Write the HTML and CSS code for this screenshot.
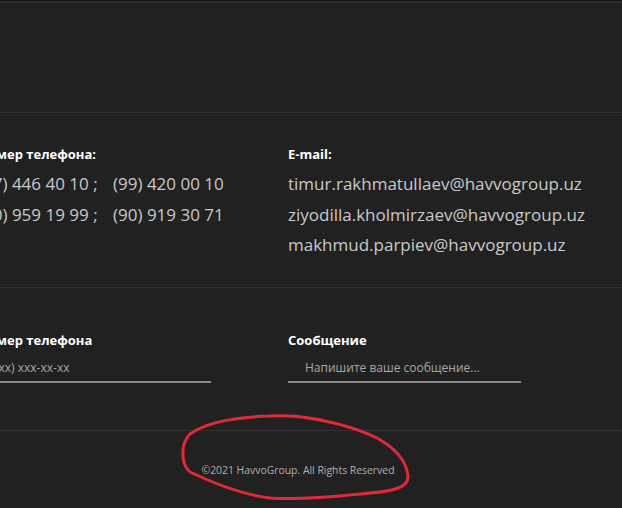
FILE: index.html
```html
<!DOCTYPE html>
<html lang="ru">
<head>
<meta charset="utf-8">
<title>HavvoGroup footer</title>
<link rel="stylesheet" href="styles.css">
</head>
<body>
<footer class="footer">
  <div class="top-space"></div>
  <section class="contacts">
    <div class="col">
      <h4 class="label">Номер телефона:</h4>
      <p class="line"><span class="ph">(97) 446 40 10 ;</span><span class="ph">(99) 420 00 10</span></p>
      <p class="line"><span class="ph">(90) 959 19 99 ;</span><span class="ph">(90) 919 30 71</span></p>
    </div>
    <div class="col">
      <h4 class="label">E-mail:</h4>
      <p class="line">timur.rakhmatullaev@havvogroup.uz</p>
      <p class="line">ziyodilla.kholmirzaev@havvogroup.uz</p>
      <p class="line">makhmud.parpiev@havvogroup.uz</p>
    </div>
  </section>
  <section class="form">
    <div class="col">
      <label class="flabel">Номер телефона</label>
      <div class="field"><span class="ph-text">(xx) xxx-xx-xx</span></div>
    </div>
    <div class="col">
      <label class="flabel">Сообщение</label>
      <div class="field"><span class="ph-text">Напишите ваше сообщение...</span></div>
    </div>
  </section>
  <div class="copyright">
    <p class="copy">©2021 HavvoGroup. All Rights Reserved</p>
    <svg class="circle" width="622" height="508" viewBox="0 0 622 508" aria-hidden="true">
      <path d="M293 415 C320 418 350 424 377 437 C395 447 407 460 408 476 C408 486 395 490 370 492 C340 495 305 499 270 497 C245 494 215 483 190 471 C180 462 181 442 190 433 C205 422 235 416 270 415 C285 414 300 415 322 419" fill="none" stroke="#e02a3c" stroke-width="3" stroke-linecap="round" stroke-linejoin="round"/>
    </svg>
  </div>
</footer>
</body>
</html>
```

FILE: styles.css
```css
html, body {
  margin: 0;
  padding: 0;
  background: #212121;
  overflow: hidden;
}
body {
  font-family: "Open Sans", "DejaVu Sans", sans-serif;
  width: 622px;
  height: 508px;
}
.footer {
  border-top: 1px solid #141414;
  box-shadow: inset 0 2px 0 #2e2e2e;
}
.top-space {
  height: 111px;
  border-bottom: 1px solid #333333;
}
.contacts, .form {
  display: grid;
  grid-template-columns: 310px 310px;
  margin-left: -22px;
  border-bottom: 1px solid #333333;
  box-sizing: border-box;
}
.contacts {
  height: 175px;
  padding-top: 32px;
}
.form {
  height: 143px;
  padding-top: 42px;
}
.label {
  margin: 0 0 6px;
  font-size: 13px;
  font-weight: 700;
  color: #ffffff;
  line-height: 18px;
}
.line {
  margin: 0;
  font-size: 17px;
  line-height: 30.5px;
  color: #c9c9c9;
  white-space: nowrap;
}
.ph:first-child {
  display: inline-block;
  width: 135px;
}
.flabel {
  display: block;
  font-size: 13px;
  font-weight: 700;
  color: #ffffff;
  line-height: 20px;
}
.field {
  width: 233px;
  height: 33px;
  border-bottom: 2px solid #8a8a8a;
  box-sizing: border-box;
  padding-top: 10px;
  padding-left: 17px;
  font-size: 12px;
  line-height: 16px;
  color: #a8a8a8;
}
.copyright {
  position: relative;
  height: 78px;
}
.copy {
  margin: 0;
  padding-top: 31px;
  padding-right: 26px;
  text-align: center;
  font-size: 10.4px;
  line-height: 16px;
  color: #b0b0b0;
}
.circle {
  position: absolute;
  left: 0;
  top: -430px;
  pointer-events: none;
}
```
